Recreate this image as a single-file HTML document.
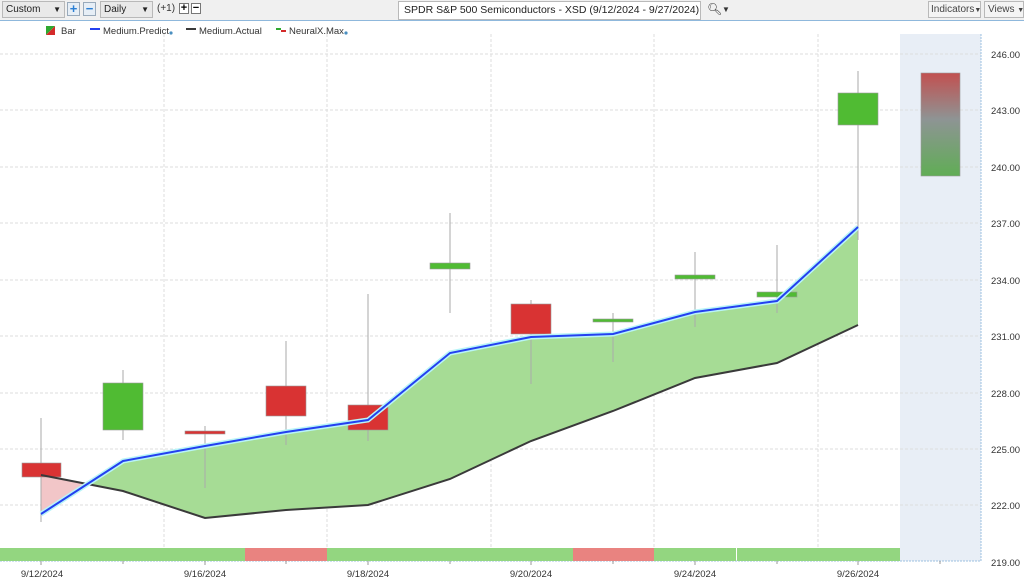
<!DOCTYPE html>
<html><head><meta charset="utf-8"><style>
*{margin:0;padding:0;box-sizing:border-box}
body{width:1024px;height:585px;background:#fff;font-family:"Liberation Sans",sans-serif;overflow:hidden;position:relative}
.tb{position:absolute;left:0;top:0;width:1024px;height:21px;background:#f0f0f0;border-bottom:1px solid #8fb8dc}
.b{position:absolute;top:1px;height:17px;border:1px solid #b9b9b9;background:#e9e9e9;font-size:10px;line-height:15px;padding-left:3px;color:#222;white-space:nowrap;overflow:hidden}
.sq{position:absolute;top:2px;width:13px;height:14px;border:1px solid #9ab;background:#e6eef6;color:#2a7fd4;font-size:13px;font-weight:bold;line-height:12px;text-align:center}
.sm{position:absolute;top:3px;width:10px;height:11px;border:1px solid #777;background:#fff;font-size:11px;line-height:9px;text-align:center;font-weight:bold;color:#000}
svg text{font-family:"Liberation Sans",sans-serif}
</style></head><body>
<div class="tb">
 <div class="b" style="left:2px;width:63px">Custom<span style="position:absolute;right:3px;font-size:8px">▼</span></div>
 <div class="sq" style="left:67px">+</div>
 <div class="sq" style="left:83px">−</div>
 <div class="b" style="left:100px;width:53px">Daily<span style="position:absolute;right:3px;font-size:8px">▼</span></div>
 <div style="position:absolute;left:157px;top:3px;font-size:10px;color:#333">(+1)</div>
 <div class="sm" style="left:179px">+</div>
 <div class="sm" style="left:191px">−</div>
 <div class="b" style="left:398px;width:303px;background:#fff;font-size:10.5px;padding-left:5px;top:1px;height:19px;line-height:17px">SPDR S&amp;P 500 Semiconductors - XSD (9/12/2024 - 9/27/2024)</div>
 <div style="position:absolute;left:707px;top:2px;font-size:12px;color:#333">&#x1F50D;&#xFE0E;</div>
 <div style="position:absolute;left:722px;top:5px;font-size:8px;color:#333">▼</div>
 <div class="b" style="left:928px;width:53px;background:#f4f4f4;color:#444;padding-left:2px">Indicators<span style="font-size:7px">▼</span></div>
 <div class="b" style="left:984px;width:40px;background:#f4f4f4;color:#444">Views <span style="font-size:7px">▼</span></div>
</div>
<svg width="1024" height="585" style="position:absolute;left:0;top:0">
 <defs>
  <linearGradient id="fg" x1="0" y1="0" x2="0" y2="1"><stop offset="0" stop-color="#c25050"/><stop offset="0.45" stop-color="#8e9494"/><stop offset="1" stop-color="#60ad55"/></linearGradient>
 </defs>
 <rect x="900" y="34" width="81" height="527" fill="#e8eef6"/>
 <g stroke="#ddd" stroke-dasharray="3,2" stroke-width="1">
  <line x1="0" y1="54" x2="981" y2="54"/><line x1="0" y1="110" x2="981" y2="110"/><line x1="0" y1="167" x2="981" y2="167"/><line x1="0" y1="223" x2="981" y2="223"/><line x1="0" y1="280" x2="981" y2="280"/><line x1="0" y1="336" x2="981" y2="336"/><line x1="0" y1="393" x2="981" y2="393"/><line x1="0" y1="449" x2="981" y2="449"/><line x1="0" y1="505" x2="981" y2="505"/>
  <line x1="164" y1="34" x2="164" y2="561"/><line x1="327" y1="34" x2="327" y2="561"/><line x1="491" y1="34" x2="491" y2="561"/><line x1="654" y1="34" x2="654" y2="561"/><line x1="818" y1="34" x2="818" y2="561"/>
 </g>
 <line x1="981" y1="34" x2="981" y2="561" stroke="#9cc0e0" stroke-dasharray="2,1"/>
 <line x1="0" y1="561" x2="981" y2="561" stroke="#9cc0e0" stroke-dasharray="2,1"/>
 <polygon points="41,475 88,484 41,514" fill="#f2c6c8"/>
 <polygon points="88,484 123,461 205,446 286,432 368,420 450,353 531,337 613,334 695,312 777,301 858,227 858,325 777,363 695,378 613,411 531,441 450,479 368,505 286,510 205,518 123,491" fill="#a6dc95"/>
 <g stroke="#aaa" stroke-width="1">
  <line x1="41" y1="418" x2="41" y2="522"/><line x1="123" y1="370" x2="123" y2="440"/><line x1="205" y1="426" x2="205" y2="488"/><line x1="286" y1="341" x2="286" y2="445"/><line x1="368" y1="294" x2="368" y2="441"/><line x1="450" y1="213" x2="450" y2="313"/><line x1="531" y1="300" x2="531" y2="384"/><line x1="613" y1="313" x2="613" y2="362"/><line x1="695" y1="252" x2="695" y2="327"/><line x1="777" y1="245" x2="777" y2="313"/><line x1="858" y1="71" x2="858" y2="240"/>
 </g>
 <g stroke="#999" stroke-width="0.6">
  <rect x="22" y="463" width="39" height="14" fill="#d93333"/>
  <rect x="103" y="383" width="40" height="47" fill="#50bb33"/>
  <rect x="185" y="431" width="40" height="3" fill="#d93333"/>
  <rect x="266" y="386" width="40" height="30" fill="#d93333"/>
  <rect x="348" y="405" width="40" height="25" fill="#d93333"/>
  <rect x="430" y="263" width="40" height="6" fill="#50bb33"/>
  <rect x="511" y="304" width="40" height="30" fill="#d93333"/>
  <rect x="593" y="319" width="40" height="3" fill="#50bb33"/>
  <rect x="675" y="275" width="40" height="4" fill="#50bb33"/>
  <rect x="757" y="292" width="40" height="5" fill="#50bb33"/>
  <rect x="838" y="93" width="40" height="32" fill="#50bb33"/>
  <rect x="921" y="73" width="39" height="103" fill="url(#fg)"/>
 </g>
 <polyline points="41,475 123,491 205,518 286,510 368,505 450,479 531,441 613,411 695,378 777,363 858,325" fill="none" stroke="#3a3a3a" stroke-width="2"/>
 <polyline points="41,514 123,461 205,446 286,432 368,420 450,353 531,337 613,334 695,312 777,301 858,227" fill="none" stroke="#b8f4f8" stroke-width="5"/>
 <polyline points="41,514 123,461 205,446 286,432 368,420 450,353 531,337 613,334 695,312 777,301 858,227" fill="none" stroke="#2440f0" stroke-width="2"/>
 <rect x="0" y="548" width="245" height="13" fill="#93d680"/>
 <rect x="245" y="548" width="82" height="13" fill="#e98380"/>
 <rect x="327" y="548" width="246" height="13" fill="#93d680"/>
 <rect x="573" y="548" width="81" height="13" fill="#e98380"/>
 <rect x="654" y="548" width="82" height="13" fill="#93d680"/>
 <rect x="737" y="548" width="163" height="13" fill="#93d680"/>
 <g stroke="#999"><line x1="41" y1="561" x2="41" y2="565"/><line x1="123" y1="561" x2="123" y2="564"/><line x1="205" y1="561" x2="205" y2="565"/><line x1="286" y1="561" x2="286" y2="564"/><line x1="368" y1="561" x2="368" y2="565"/><line x1="450" y1="561" x2="450" y2="564"/><line x1="531" y1="561" x2="531" y2="565"/><line x1="613" y1="561" x2="613" y2="564"/><line x1="695" y1="561" x2="695" y2="565"/><line x1="777" y1="561" x2="777" y2="564"/><line x1="858" y1="561" x2="858" y2="565"/><line x1="940" y1="561" x2="940" y2="564"/></g>
 <g font-size="9.5" fill="#333" text-anchor="middle">
  <text x="42" y="577">9/12/2024</text><text x="205" y="577">9/16/2024</text><text x="368" y="577">9/18/2024</text><text x="531" y="577">9/20/2024</text><text x="695" y="577">9/24/2024</text><text x="858" y="577">9/26/2024</text>
 </g>
 <g font-size="9.5" fill="#333">
  <text x="991" y="58">246.00</text><text x="991" y="114">243.00</text><text x="991" y="171">240.00</text><text x="991" y="227">237.00</text><text x="991" y="284">234.00</text><text x="991" y="340">231.00</text><text x="991" y="397">228.00</text><text x="991" y="453">225.00</text><text x="991" y="509">222.00</text><text x="991" y="566">219.00</text>
 </g>
 <polygon points="46,26 55,26 46,35" fill="#2fa82f"/><polygon points="55,26 55,35 46,35" fill="#d42a2a"/>
 <text x="61" y="34" font-size="9.5" fill="#333">Bar</text>
 <line x1="90" y1="29" x2="100" y2="29" stroke="#2440f0" stroke-width="2"/>
 <text x="103" y="34" font-size="9.5" fill="#333">Medium.Predict</text><circle cx="171" cy="33" r="1.6" fill="#4a8fc0"/>
 <line x1="186" y1="29" x2="196" y2="29" stroke="#3a3a3a" stroke-width="2"/>
 <text x="199" y="34" font-size="9.5" fill="#333">Medium.Actual</text>
 <rect x="276" y="28" width="5" height="2" fill="#2fa82f"/><rect x="281" y="30" width="5" height="2" fill="#d42a2a"/>
 <text x="289" y="34" font-size="9.5" fill="#333">NeuralX.Max</text><circle cx="346" cy="33" r="1.6" fill="#4a8fc0"/>
</svg>
</body></html>
